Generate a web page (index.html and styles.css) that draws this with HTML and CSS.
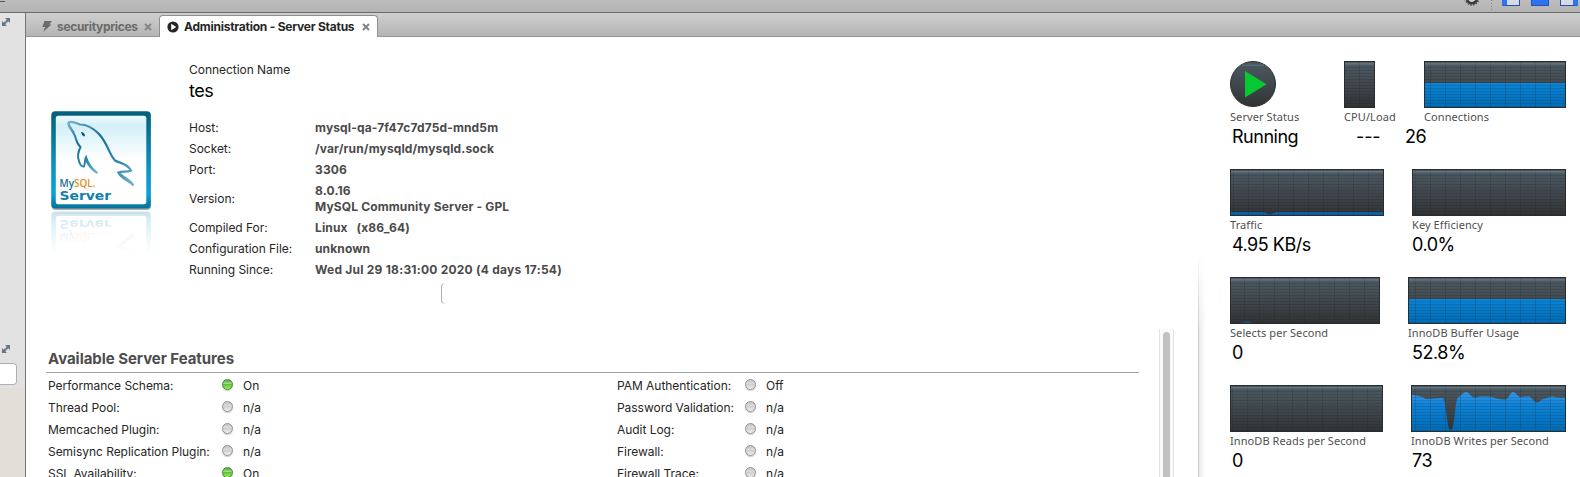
FILE: index.html
```
<!DOCTYPE html>
<html lang="en">
<head>
<meta charset="utf-8">
<title>Administration - Server Status</title>
<link rel="stylesheet" href="styles.css">
</head>
<body>
<header class="toolbar">
  <span class="toolbar-mark"></span>
  <svg class="gear" width="18" height="7" viewBox="0 0 18 7"><circle cx="9" cy="-2" r="7" fill="none" stroke="#4a4a4a" stroke-width="1.400" stroke-dasharray="1.500 1.300"/><circle cx="9" cy="-1.800" r="5" fill="#d4d4d4" stroke="#3c3c3c" stroke-width="2.600"/></svg>
  <span class="separator"></span>
  <span class="pane pane-left"></span><span class="pane pane-bottom"></span><span class="pane pane-right"></span>
</header>
<div class="window">
  <aside class="sidebar">
    <div class="side-top">
      <svg class="expand" width="10" height="10" viewBox="0 0 10 10"><path d="M4 1h5v5L7.300 4.300 5.800 5.800 4.300 4.300 5.800 2.800zM1 4l1.700 1.700L4 4.300 5.600 5.900 4.200 7.200 6 9H1z" fill="#667586"/></svg>
      <svg class="expand second" width="10" height="10" viewBox="0 0 10 10"><path d="M4 1h5v5L7.300 4.300 5.800 5.800 4.300 4.300 5.800 2.800zM1 4l1.700 1.700L4 4.300 5.600 5.900 4.200 7.200 6 9H1z" fill="#667586"/></svg>
      <div class="search"></div>
    </div>
  </aside>
  <main class="content">
    <nav class="tabs">
      <div class="tab">
        <svg width="12" height="13" viewBox="0 0 12 13"><path d="M3.500 1H11L8.300 4.500H10.500L2 12 4.300 7H1.300z" fill="#6c6c6c"/></svg>
        <span class="tab-name one">securityprices</span>
        <svg class="close" width="8" height="8" viewBox="0 0 8 8"><path d="M1 1l6 6M7 1L1 7" stroke="#858585" stroke-width="2"/></svg>
      </div>
      <div class="tab active">
        <svg width="12" height="12" viewBox="0 0 12 12"><circle cx="6" cy="6" r="5.600" fill="#262626"/><path d="M4.200 2.800L9.200 6 4.200 9.200z" fill="#fff"/></svg>
        <span class="tab-name two">Administration - Server Status</span>
        <svg class="close" width="8" height="8" viewBox="0 0 8 8"><path d="M1 1l6 6M7 1L1 7" stroke="#858585" stroke-width="2"/></svg>
      </div>
    </nav>
    <div class="page">
      <div class="left">
        <section class="summary">
          <svg class="logo" width="101" height="146" viewBox="0 0 101 146">
            <defs>
              <linearGradient id="frame" x1="0" y1="0" x2="0" y2="1"><stop offset="0" stop-color="#045f7a"/><stop offset=".6" stop-color="#0a97c4"/><stop offset=".85" stop-color="#0aa3d6"/><stop offset="1" stop-color="#067196"/></linearGradient>
              <linearGradient id="sky" x1="0" y1="0" x2="0" y2="1"><stop offset="0" stop-color="#edf9fc"/><stop offset=".12" stop-color="#d3f0f8"/><stop offset=".5" stop-color="#fff"/></linearGradient>
              <linearGradient id="fin" x1="0" y1="0" x2="1" y2="1"><stop offset="0" stop-color="#7fb0c6"/><stop offset=".35" stop-color="#14709a"/><stop offset=".7" stop-color="#2b86ab"/><stop offset="1" stop-color="#79b4cb"/></linearGradient>
              <linearGradient id="fade" x1="0" y1="0" x2="0" y2="1"><stop offset="0" stop-color="#fff" stop-opacity=".22"/><stop offset="1" stop-color="#fff" stop-opacity="0"/></linearGradient>
              <mask id="below"><rect y="99" width="101" height="43" fill="url(#fade)"/></mask>
            </defs>
            <rect x=".5" y="1.500" width="99.500" height="97.500" rx="4" fill="#999" opacity=".8"/>
            <g id="badge">
              <rect x=".3" y=".3" width="99.500" height="97.200" rx="4" fill="url(#frame)"/>
              <rect x="4.800" y="4.800" width="90.500" height="88.500" rx="2.500" fill="url(#sky)"/>
              <path d="M23 22C20 18 16 14 17.500 11.500C20 9.500 25 12 29 13.500C36 13.500 43 18 48 23C57 33 58 43 64 49.500C68 52 76 52 80 59.500C76 61.500 72 60 67.500 61.500C72 67 78 67 82.500 74.500C77 69 69 67 67.500 61.500" fill="none" stroke="url(#fin)" stroke-width="2.200"/>
              <path d="M17.500 11.500C19 19 24 22 25 28C26 33 28 34 29.500 36C27 41 26 45 28 50C29 54 31 56 33 55.500C34.500 52 33.500 48 35 46C37 53 41 58 46.500 62C42 60 37 54 35 49" fill="none" stroke="url(#fin)" stroke-width="2"/>
              <path d="M30.500 21.500q3 0 3 3.500l-1.500-.5z" fill="#07587c" stroke="#07587c"/>
              <text x="8.500" y="76" class="brand" textLength="36" lengthAdjust="spacingAndGlyphs"><tspan fill="#14708f">My</tspan><tspan fill="#ee8d1b">SQL.</tspan></text>
              <text x="8.500" y="89.300" class="product" textLength="51.500" lengthAdjust="spacingAndGlyphs">Server</text>
            </g>
            <g mask="url(#below)"><use href="#badge" transform="matrix(1 0 0 -1 0 198)"/></g>
          </svg>
          <div class="details">
            <div class="caption"><span>Connection Name</span></div>
            <div class="conn">tes</div>
            <dl class="facts">
              <dt>Host:</dt><dd>mysql-qa-7f47c7d75d-mnd5m</dd>
              <dt>Socket:</dt><dd>/var/run/mysqld/mysqld.sock</dd>
              <dt>Port:</dt><dd>3306</dd>
              <dt>Version:</dt><dd>8.0.16<br>MySQL Community Server - GPL</dd>
              <dt>Compiled For:</dt><dd>Linux&nbsp;&nbsp; (x86_64)</dd>
              <dt>Configuration File:</dt><dd>unknown</dd>
              <dt>Running Since:</dt><dd class="since">Wed Jul 29 18:31:00 2020 (4 days 17:54)</dd>
            </dl>
            <div class="bracket"></div>
          </div>
        </section>
        <section class="features">
          <div class="features-body">
            <h2><span>Available Server Features</span></h2>
            <div class="feature-cols">
              <div class="feature-list first">
                <span>Performance Schema:</span><i class="led on"></i><b>On</b>
                <span>Thread Pool:</span><i class="led"></i><b>n/a</b>
                <span>Memcached Plugin:</span><i class="led"></i><b>n/a</b>
                <span>Semisync Replication Plugin:</span><i class="led"></i><b>n/a</b>
                <span>SSL Availability:</span><i class="led on"></i><b>On</b>
              </div>
              <div class="feature-list second-col">
                <span>PAM Authentication:</span><i class="led"></i><b>Off</b>
                <span>Password Validation:</span><i class="led"></i><b>n/a</b>
                <span>Audit Log:</span><i class="led"></i><b>n/a</b>
                <span>Firewall:</span><i class="led"></i><b>n/a</b>
                <span>Firewall Trace:</span><i class="led"></i><b>n/a</b>
              </div>
            </div>
          </div>
          <div class="scrollbar"><div class="thumb"></div></div>
        </section>
      </div>
      <div class="divider"></div>
      <section class="metrics">
        <div class="metric-row">
          <div class="metric status">
            <svg width="46" height="47" viewBox="0 0 46 47"><defs><linearGradient id="disc" x1="0" y1="0" x2="0" y2="1"><stop offset="0" stop-color="#4b5962"/><stop offset=".5" stop-color="#41474c"/><stop offset="1" stop-color="#303335"/></linearGradient></defs><circle cx="23" cy="23" r="22.500" fill="url(#disc)" stroke="#2c2f31"/><path d="M12 4.300h22" stroke="#5b6972" stroke-width="1.500"/><path d="M15 10l21.500 13.200L15 36.500z" fill="#06c832"/></svg>
            <span class="label">Server Status</span>
          </div>
          <div class="metric cpu"><div class="chart"></div><span class="label">CPU/Load</span></div>
          <div class="metric conns"><div class="chart"><div class="fill"></div></div><span class="label">Connections</span></div>
        </div>
        <div class="values three"><span>Running</span><span class="dashes">---</span><span>26</span></div>

        <div class="metric-row">
          <div class="metric w154"><div class="chart"><svg width="152" height="45" viewBox="1 1 152 45"><path d="M1 43.200H35C37 44 38 45 40 45.500C42 45 43 44 46 43.200H153V46H1z" fill="#0568b4"/></svg></div><span class="label">Traffic</span></div>
          <div class="metric w154"><div class="chart"></div><span class="label">Key Efficiency</span></div>
        </div>
        <div class="values"><span>4.95 KB/s</span><span>0.0%</span></div>

        <div class="metric-row">
          <div class="metric w150"><div class="chart"><svg width="148" height="45" viewBox="1 1 148 45"><path d="M10 46Q16 42.500 23 46z" fill="#155b85"/></svg></div><span class="label">Selects per Second</span></div>
          <div class="metric w158"><div class="chart"><div class="fill"></div></div><span class="label">InnoDB Buffer Usage</span></div>
        </div>
        <div class="values"><span>0</span><span>52.8%</span></div>

        <div class="metric-row">
          <div class="metric w153"><div class="chart"></div><span class="label">InnoDB Reads per Second</span></div>
          <div class="metric w155"><div class="chart"><svg width="153" height="45" viewBox="1 1 153 45"><defs><linearGradient id="water" gradientUnits="userSpaceOnUse" x1="0" y1="6" x2="0" y2="46"><stop offset="0" stop-color="#3a9bf2"/><stop offset=".35" stop-color="#0e83d6"/><stop offset="1" stop-color="#006cb8"/></linearGradient></defs><path d="M1 9.800C5 10.500 8 11 12 12.300C14 14 15 14 17 14C22 14 28 12.500 32 13.200C35 15 36 40 38.500 44.500H41C44 38 44 16 47 12.300C50 11 52 7.200 55 7.200C59 7.200 60 12.500 64 12.800C68 11.500 74 11.300 81 12C86 14 90 14.500 95 14.500C98 13 99 7.200 102 7.200C105 7.200 107 12.300 110 12.300C113 12 115 11 118 11.200C121 12.500 123 17.300 126 17.500C129 17 130 14 134 13.500C137 13 138 11.500 142 11.500C146 13 150 12.800 154 12.800V46H1z" fill="url(#water)"/></svg></div><span class="label">InnoDB Writes per Second</span></div>
        </div>
        <div class="values"><span>0</span><span>73</span></div>
      </section>
    </div>
  </main>
</div>
</body>
</html>
```
FILE: styles.css
```
* { box-sizing: border-box; }
body {
  margin: 0;
  width: 1580px;
  height: 477px;
  overflow: hidden;
  display: flex;
  flex-direction: column;
  background: #fff;
  color: #262626;
  font: 12px/16px Inter, "Liberation Sans", sans-serif;
  letter-spacing: -.04px;
}

.toolbar {
  display: flex;
  align-items: flex-start;
  height: 13px;
  flex: none;
  background: linear-gradient(#bdbdbd, #b3b3b3);
  border-bottom: 1px solid #6b6b6b;
}
.toolbar-mark { width: 5px; height: 1px; margin-top: 1px; background: #555; }
.gear { margin-left: 1458px; }
.separator { width: 1px; height: 12px; margin-left: 10px; background: repeating-linear-gradient(#858585 0 1px, transparent 1px 3px); }
.pane { width: 18px; height: 6px; background: #d5dae3; border: 1px solid #2450b8; border-top: 0; margin-left: 11px; }
.pane-left { margin-left: 10px; border-left: 5px solid #2f72ef; }
.pane-bottom { background: #2f72ef; }
.pane-right { border-right: 5px solid #2f72ef; }

.window { display: flex; flex: 1; min-height: 0; }
.sidebar { width: 26px; flex: none; border-right: 1px solid #757575; background: #e2dfd8; }
.side-top { display: flex; flex-direction: column; height: 375px; background: #e2e2e2; padding-top: 4px; }
.expand { margin-left: 1px; flex: none; }
.expand.second { margin-top: 317px; }
.search { width: 17px; height: 22px; margin-top: 9px; background: #fff; border: 1px solid #b0b0b0; border-left: 0; border-radius: 0 4px 4px 0; }

.content { flex: 1; display: flex; flex-direction: column; min-width: 0; }
.tabs {
  display: flex;
  align-items: flex-end;
  height: 24px;
  flex: none;
  background: linear-gradient(#cfcfcf, #b3b3b3);
  box-shadow: inset 0 -1px #969696;
}
.tab { display: flex; align-items: center; width: 133px; height: 22px; padding: 1px 0 0 15px; font-weight: 700; color: #6b6b6b; }
.tab svg { flex: none; }
.tab .close { margin-left: auto; margin-right: 7px; }
.tab.active { width: 219px; padding-left: 7px; color: #262626; background: #fff; border: 1px solid #8f8f8f; border-bottom: 0; border-radius: 4px 4px 0 0; }
.tab-name { margin-left: 4px; padding-top: 1px; white-space: nowrap; }
.tab-name.one { letter-spacing: -.32px; }
.tab-name.two { letter-spacing: -.24px; }
.tab.active .tab-name { margin-left: 5px; padding-top: 0; }

.page { display: flex; flex: 1; min-height: 0; }
.left { width: 1172px; flex: none; display: flex; flex-direction: column; }
.summary { display: flex; height: 292px; flex: none; }
.logo { margin: 74px 0 0 25px; flex: none; letter-spacing: 0; }
.brand { font: 600 11.500px "Open Sans", sans-serif; }
.product { font: 700 13px "DejaVu Sans", sans-serif; fill: #0f80ad; }
.details { padding: 25px 0 0 37px; }
.conn { font-size: 18px; line-height: 22px; color: #000; margin-top: 1px; padding-top: 1px; height: 22px; letter-spacing: -.5px; }
.facts { display: grid; grid-template-columns: 126px auto; row-gap: 5px; align-items: center; margin: 19px 0 0; }
.facts dd { margin: 0; font-weight: 700; color: #4a4a4a; white-space: nowrap; letter-spacing: .14px; }
.facts .since { letter-spacing: .23px; }
.bracket { width: 4px; height: 21px; margin: 5px 0 0 252px; border: 1px solid #b0b0b0; border-right: 0; border-radius: 4px 0 0 4px; mask-image: linear-gradient(90deg, #000 40%, transparent); }

.features { display: flex; flex: 1; min-height: 0; overflow: hidden; }
.features-body { width: 1093px; margin-left: 20px; flex: none; }
h2 { margin: 19px 0 0; padding: 1px 0 0 2px; height: 25px; font-size: 15px; line-height: 20px; color: #4d4d4d; border-bottom: 1px solid #a3a3a3; }
.feature-cols { display: flex; padding: 2px 0 0 2px; }
.feature-list { display: grid; grid-auto-rows: 22px; line-height: 22px; white-space: nowrap; }
.feature-list b { font-weight: 400; }
.first { grid-template-columns: 173.5px 21.500px auto; width: 569px; }
.second-col { grid-template-columns: 127.5px 21.500px auto; }
.led { width: 11px; height: 11px; margin-top: 4px; border-radius: 50%; border: 1px solid #929292; background: linear-gradient(#c4c4c4, #dedede 45%, #cfcfcf 50%, #f0f0f0); box-shadow: 0 1px 1px #ccc; }
.led.on { border-color: #3f8a35; background: linear-gradient(#52a83e, #a0dc86 40%, #5cc435 50%, #a4ee5a); }
.scrollbar { width: 15px; margin-left: 20px; background: #fafafa; border: solid #e3e3e3; border-width: 0 1px; padding: 3px 3px 0; display: flex; }
.thumb { flex: 1; background: #c1c1c1; border-radius: 4px 4px 0 0; }

.divider { width: 8px; flex: none; margin-top: 215px; border-left: 1px solid #c9c9c9; background: linear-gradient(90deg, #ebebeb, #fff); mask-image: linear-gradient(transparent, #000 80px); }

.metrics { padding: 24px 0 0 24px; width: 360px; }
.metric-row { display: flex; justify-content: space-between; height: 65px; }
.metric { display: flex; flex-direction: column; }
.label { font: 11px/16px "Noto Sans", "Open Sans", sans-serif; color: #4f4f4f; white-space: nowrap; margin-top: 1px; letter-spacing: .08px; }
.status { width: 114px; }
.cpu { width: 80px; }
.cpu .chart { width: 31px; }
.conns { width: 142px; }
.w150 { width: 150px; }
.w153 { width: 153px; }
.w154 { width: 154px; }
.w155 { width: 155px; }
.w158 { width: 158px; }
.values { display: grid; grid-template-columns: 180px auto; height: 43px; padding-left: 2px; font-size: 18px; line-height: 22px; letter-spacing: -.48px; color: #000; white-space: nowrap; }
.values.three { grid-template-columns: 124px 49px auto; }
.dashes { letter-spacing: -.1px; }
.chart { position: relative; height: 47px; border: 1px solid #2a2d2f; background: linear-gradient(#4c5a62, #41484d 50%, #303335); overflow: hidden; display: flex; align-items: flex-end; }
.chart svg { display: block; }
.fill { width: 100%; height: 24px; background: linear-gradient(#0a84d6, #006cb6); }
.chart::after {
  content: "";
  position: absolute;
  inset: 0;
  background:
    linear-gradient(rgba(150, 175, 190, .28), rgba(150, 175, 190, .28)) 0 1px / 100% 2px no-repeat,
    repeating-linear-gradient(rgba(20, 30, 40, 0) 0 2px, rgba(20, 30, 40, .16) 2px 3px),
    linear-gradient(90deg, rgba(20, 30, 40, .2) 1px, rgba(20, 30, 40, 0) 1px) right 0 top 0 / 15px 100%;
}
```
